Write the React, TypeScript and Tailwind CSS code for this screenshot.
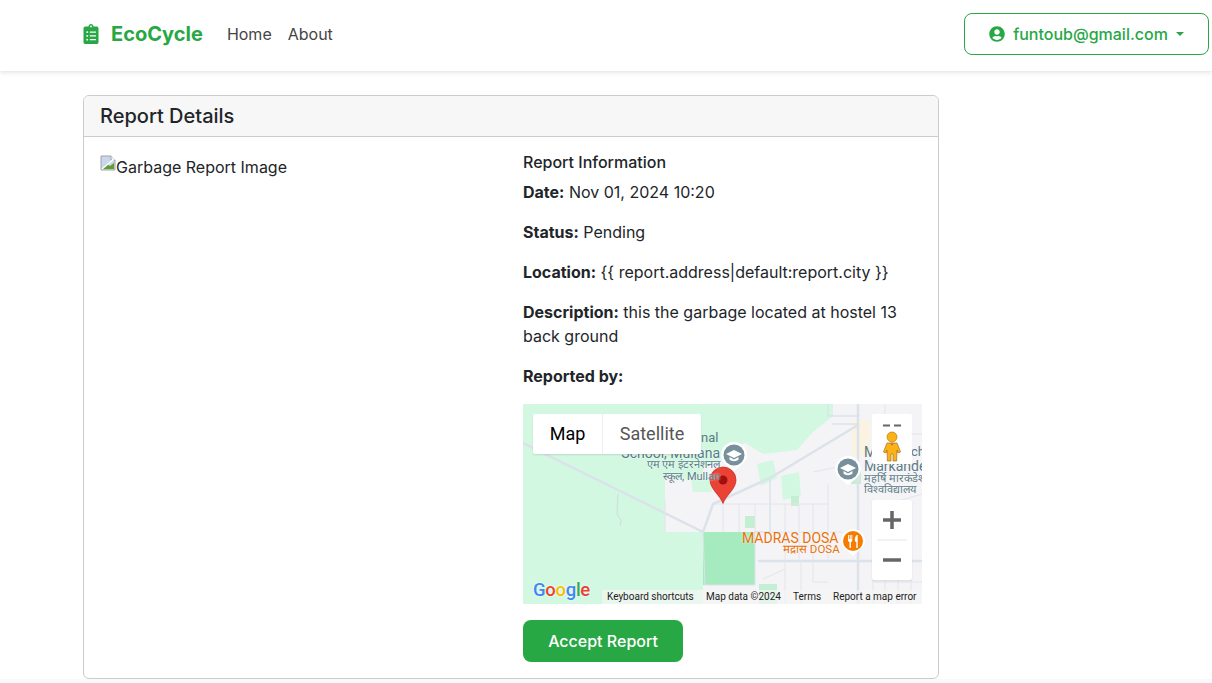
import React from 'react';
import { FaClipboardList, FaUserCircle } from 'react-icons/fa';

const SchoolPin = ({ x, y }: { x: number; y: number }) => (
  <g transform={`translate(${x} ${y})`}>
    <path d="M-13 0a13 13 0 1 1 26 0c0 7-6 10-13 16c-7-6-13-9-13-16z" fill="#fff" />
    <circle r="10.5" fill="#78909c" />
    <path d="M0-5L8-1L0 3L-8-1z" fill="#fff" />
    <path d="M-4.5 2v2.5c2 2.2 7 2.2 9 0V2L0 4.5z" fill="#fff" />
  </g>
);

const MapView = () => (
  <div className="relative mt-[16px] h-[200px] w-[399px] overflow-hidden bg-[#d3f8e2] font-['Roboto',sans-serif]">
    <svg width="399" height="200" viewBox="0 0 399 200" className="absolute left-0 top-0">
      {/* land use */}
      <path d="M310 0L310 12L290 28L274 46L240 50L222 39L205 46L196 58L182 62L176 76L142 74L142 128L180 128L180 200L399 200L399 0z" fill="#f4f3f5" />
      <rect x="180" y="128" width="52" height="53" fill="#a6ebc0" />
      <path d="M168 74L192 74L188 88L170 88z" fill="#d3f8e2" />
      <path d="M234 60L250 56L254 74L238 82z" fill="#d3f8e2" />
      <path d="M258 72L276 68L278 92L260 96z" fill="#d3f8e2" />
      <path d="M222 112h10v12h-10zM268 92h8v10h-8zM236 180h18v20h-18zM328 62h10v18h-10z" fill="#c4efd2" />
      <rect x="329" y="16" width="18" height="36" fill="#faf3e2" />
      {/* main roads */}
      <g fill="none" stroke="#dbe2ea" strokeLinecap="round">
        <path d="M0 39L180 128" strokeWidth="2.5" />
        <path d="M180 128L190 100L247 74L335 21" strokeWidth="2.5" />
        <path d="M335 0L335 200" strokeWidth="2.5" />
        <path d="M236 157L399 157" strokeWidth="2.5" />
        <path d="M247 74L247 128L232 128" strokeWidth="1.5" />
        <path d="M310 20L335 20M305 0L305 12L336 12" strokeWidth="1.5" />
        <path d="M232 128L232 181L182 181L180 128" strokeWidth="1" />
      </g>
      {/* side streets */}
      <g fill="none" stroke="#e2e6ed" strokeWidth="1">
        <path d="M142 96V128" />
        <path d="M200 100V128M216 100V128M232 100V128M262 100V157M276 100V157M290 100V157M305 80V157" />
        <path d="M192 100H305M248 128H320M290 68L330 60" />
        <path d="M262 157V200M278 157V200M290 157V178H305M350 157V200M362 157V200M375 157V200M388 157V200" />
        <path d="M240 175L262 165M350 178H399M365 100L399 90M350 30L399 30M362 0V20" />
      </g>
      <path d="M95 90L94 110L98 116L97 122" stroke="#c9d6d6" strokeWidth=".8" fill="none" />
      <SchoolPin x={211} y={51} />
      <SchoolPin x={325} y={65} />
      {/* restaurant */}
      <g transform="translate(330 137)">
        <path d="M-12 0a12 12 0 1 1 24 0c0 6-6 9-12 15c-6-6-12-9-12-15z" fill="#fff" />
        <circle r="10" fill="#f57c00" />
        <path d="M-5-6v5c0 1 .8 2 1.500 2v6h1.400V1c.7 0 1.400-1 1.400-2v-5h-.9v4h-.7v-4h-1v4h-.8v-4zM3.800-6c-1.500 1-2 3-2 5c0 1 .6 2 1.500 2v6h1.400v-13z" fill="#fff" />
      </g>
      {/* marker */}
      <path d="M200 99.500C197 91 187 85 187 76a13 13 0 1 1 26 0c0 9-10 15-13 23.500z" fill="#ea4335" stroke="#c5221f" strokeWidth=".7" />
      <circle cx="200" cy="76" r="4.500" fill="#a50e0e" />
    </svg>

    {/* place labels */}
    <div className="absolute left-[77px] top-[44px] w-[120px] text-right text-[14px] leading-[11px] text-[#5b7a87] [text-shadow:0_0_2px_#fff]">
      <div>School, Mullana</div>
      <div className="text-[11px] leading-[12px]">एम एम इंटरनेशनल</div>
      <div className="text-[11px] leading-[11px]">स्कूल, Mullan</div>
    </div>
    <div className="absolute left-[178px] top-[27px] text-[13px] leading-[14px] text-[#5b7a87]">nal</div>
    <div className="absolute left-[341px] top-[41px] text-[14px] leading-[14px] text-[#5b7a87]">M</div>
    <div className="absolute left-[388px] top-[41px] text-[13px] leading-[14px] text-[#5b7a87]">ch</div>
    <div className="absolute left-[341px] top-[55px] w-[58px] overflow-hidden whitespace-nowrap text-[14px] leading-[14px] text-[#5b7a87] [text-shadow:0_0_2px_#fff]">
      <div>Markande</div>
      <div className="text-[11px] leading-[11px]">महर्षि मारकंडेश्वर</div>
      <div className="text-[11px] leading-[11px]">विश्वविद्यालय</div>
    </div>
    <div className="absolute left-[219px] top-[127px] whitespace-nowrap text-[14px] leading-[15px] text-[#e8710a] [text-shadow:0_0_2px_#fff]">MADRAS DOSA</div>
    <div className="absolute left-[260px] top-[139px] whitespace-nowrap text-[11.500px] leading-[13px] text-[#e8710a] [text-shadow:0_0_2px_#fff]">मद्रास DOSA</div>

    {/* map type */}
    <div className="absolute left-[10px] top-[10px] flex h-[40px] w-[168px] rounded-[2px] bg-white text-[18px] shadow-[0_1px_2px_rgba(0,0,0,0.12)]">
      <div className="flex w-[70px] items-center justify-center border-r border-[#eee] text-black">Map</div>
      <div className="flex flex-1 items-center justify-center text-[#565656]">Satellite</div>
    </div>

    {/* fullscreen and pegman */}
    <div className="absolute left-[349px] top-[10px] h-[50px] w-[40px] rounded-[2px] bg-white">
      <svg width="40" height="50" viewBox="0 0 40 50">
        <path d="M11 11.500h7M22 11.500h7" stroke="#666" strokeWidth="1.800" />
        <circle cx="20" cy="23" r="5" fill="#fbb117" stroke="#b47e16" strokeWidth=".7" />
        <path d="M15 29h10l3.500 9-2.500 1-1-3-.4 11H21v-7h-2v7h-3.600L15 36l-1 3-2.500-1z" fill="#fbb117" stroke="#a5701a" strokeWidth=".7" />
        <path d="M18 29l2 3 2-3z" fill="#d9762b" />
      </svg>
    </div>

    {/* zoom */}
    <div className="absolute left-[349px] top-[96px] h-[80px] w-[40px] rounded-[2px] bg-white shadow-[0_1px_2px_rgba(0,0,0,0.1)]">
      <svg width="40" height="80" viewBox="0 0 40 80">
        <path d="M11 20h18M20 11v18" stroke="#666" strokeWidth="3.500" />
        <path d="M5 40h30" stroke="#e6e6e6" />
        <path d="M11 60h18" stroke="#666" strokeWidth="3.500" />
      </svg>
    </div>

    {/* attribution */}
    <div className="absolute left-[10px] top-[175px] text-[18.500px] font-medium leading-[22px] tracking-[-0.3px] [text-shadow:0_0_2px_#fff]">
      <span className="text-[#4285f4]">G</span>
      <span className="text-[#ea4335]">o</span>
      <span className="text-[#fbbc05]">o</span>
      <span className="text-[#4285f4]">g</span>
      <span className="text-[#34a853]">l</span>
      <span className="text-[#ea4335]">e</span>
    </div>
    <div className="absolute bottom-0 left-[79px] flex h-[14px] w-[320px] items-center whitespace-nowrap bg-[rgba(245,245,245,0.7)] text-[10px] leading-[14px] text-[#222]">
      <span className="ml-[5px] w-[99px]">Keyboard shortcuts</span>
      <span className="w-[87px]">Map data ©2024</span>
      <span className="w-[40px]">Terms</span>
      <span>Report a map error</span>
    </div>
  </div>
);

export default function App() {
  return (
    <div className="flex h-[683px] flex-col overflow-hidden bg-white font-['Inter',sans-serif] text-[16px] leading-[24px] text-[#212529]">
      <nav className="flex h-[71px] shrink-0 items-center justify-between bg-white pb-[4px] pl-[83px] pr-[3px] shadow-[0_2px_4px_rgba(0,0,0,0.1)]">
        <div className="flex items-center">
          <FaClipboardList className="mr-[12px] h-[20px] w-[16px] text-[#28a745]" />
          <span className="mr-[24px] text-[20px] font-bold text-[#28a745]">EcoCycle</span>
          <a className="mr-[16px] text-[#444]">Home</a>
          <a className="text-[#444]">About</a>
        </div>
        <button className="flex h-[42px] w-[245px] items-center justify-center rounded-[8px] border border-[#28a745] font-medium text-[#28a745]">
          <FaUserCircle className="mr-[8px] h-[16px] w-[16px]" />
          funtoub@gmail.com
          <span className="ml-[8px] h-0 w-0 border-x-[4.8px] border-t-[4.8px] border-x-transparent border-t-[#28a745]" />
        </button>
      </nav>

      <main className="flex-1 pl-[83px] pt-[24px]">
        <div className="w-[856px] rounded-[6px] border border-[#ccc]">
          <div className="flex h-[41px] items-center rounded-t-[6px] border-b border-[#ccc] bg-[#f7f7f7] px-[16px] text-[20px] font-medium">
            Report Details
          </div>
          <div className="grid grid-cols-2 gap-[24px] p-[16px]">
            <div className="flex h-[24px] items-start pt-[3px]">
              <svg width="16" height="16" viewBox="0 0 16 16" className="-mt-[1px] shrink-0">
                <path d="M1 1h10l4 4v10H1z" fill="#c9d6ee" stroke="#a3a3a3" />
                <path d="M11 1v4h4" fill="#fff" stroke="#a3a3a3" />
                <path d="M2 14l5-5 3 2 4-3v6z" fill="#5aa02c" />
                <path d="M2 14L14 4" stroke="#fff" strokeWidth="1.500" />
              </svg>
              <span className="mt-[-1px]">Garbage Report Image</span>
            </div>
            <div>
              <h6 className="-mt-[3px] mb-[6px] font-medium">Report Information</h6>
              <p className="mb-[16px]"><strong className="font-bold">Date:</strong> Nov 01, 2024 10:20</p>
              <p className="mb-[16px]"><strong className="font-bold">Status:</strong> Pending</p>
              <p className="mb-[16px]"><strong className="font-bold">Location:</strong> {'{{ report.address|default:report.city }}'}</p>
              <p className="mb-[16px]"><strong className="font-bold">Description:</strong> this the garbage located at hostel 13 back ground</p>
              <p><strong className="font-bold">Reported by:</strong></p>
              <MapView />
              <button className="mt-[16px] h-[42px] w-[160px] rounded-[8px] bg-[#28a745] font-medium text-white">
                Accept Report
              </button>
            </div>
          </div>
        </div>
      </main>
      <div className="h-[4px] shrink-0 bg-[#f8f9fa]" />
    </div>
  );
}
